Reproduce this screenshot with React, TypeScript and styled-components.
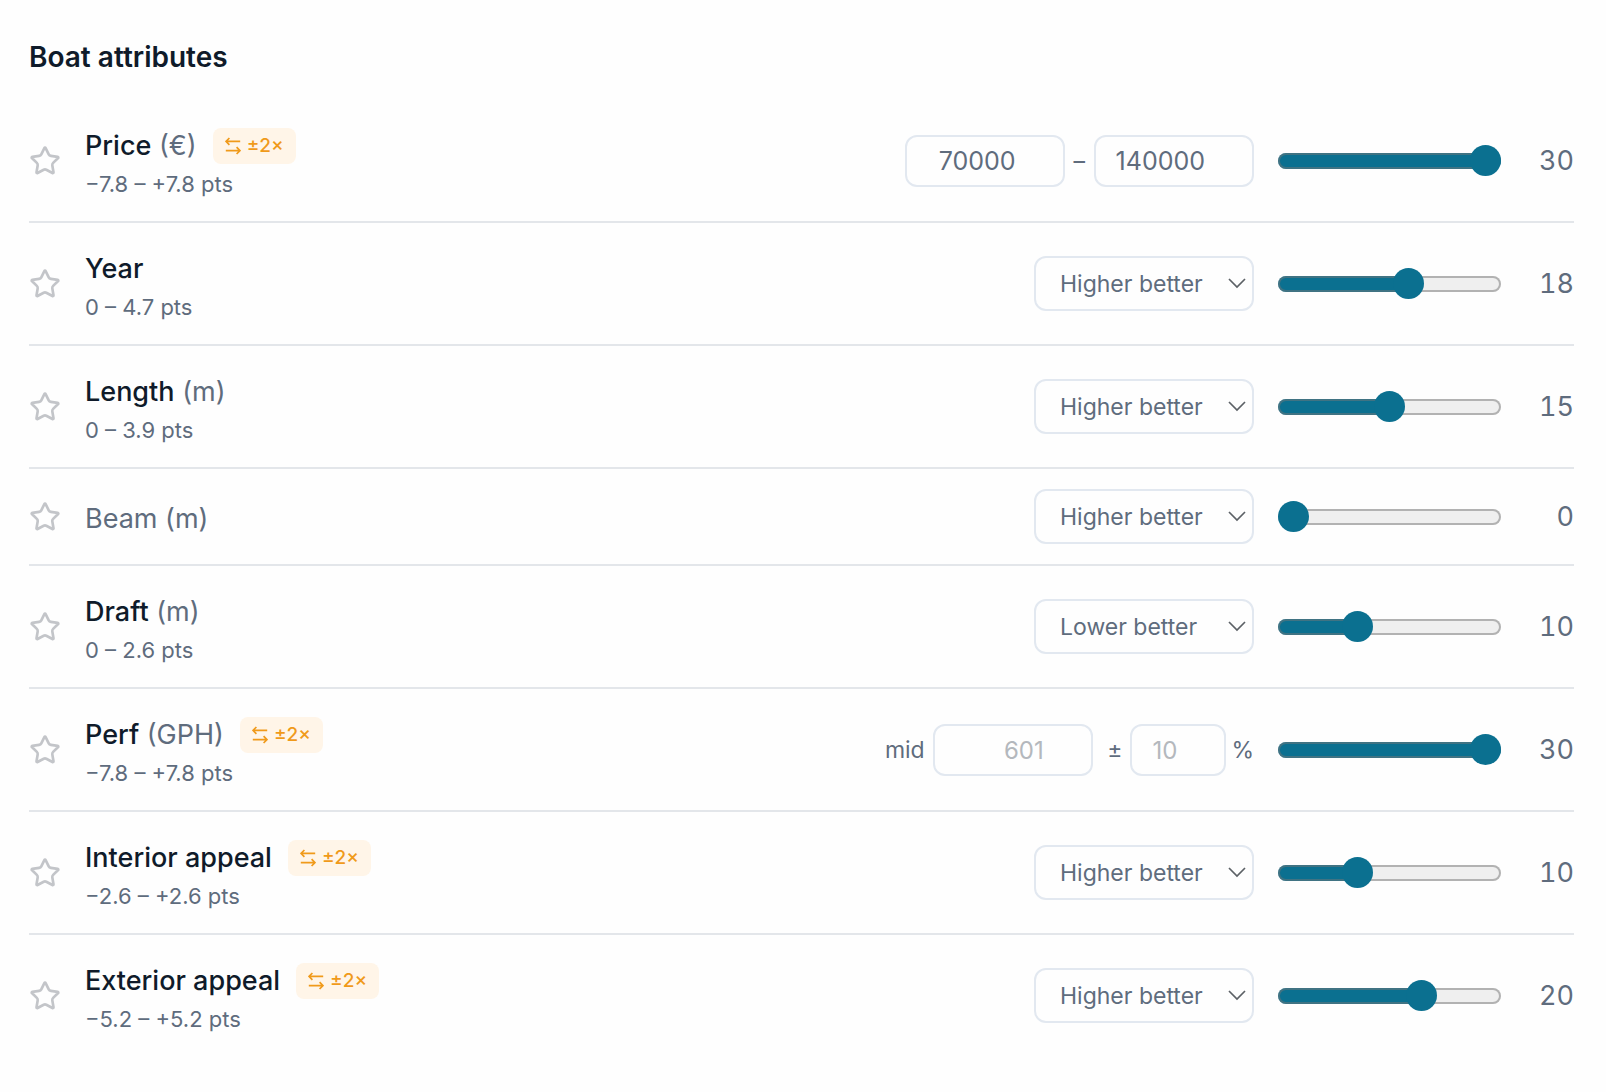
import React, { useState } from "react";
import styled, { createGlobalStyle } from "styled-components";
import { Star } from "lucide-react";

const color = {
  ink: "#0f1b2a",
  muted: "#5f6c7d",
  line: "#e3e6ea",
  field: "#e2e8f0",
  faint: "#b4b8bd",
  star: "#c3c5c9",
  accent: "#0b7090",
  amber: "#f09a1a",
  amberSoft: "#fff5e8",
};

const GlobalStyle = createGlobalStyle`
  *, *::before, *::after { box-sizing: border-box; }
  body {
    margin: 0;
    background: #fefefe;
    color: ${color.ink};
    font-family: Inter, "Liberation Sans", sans-serif;
  }
  button, input, select { font: inherit; }
`;

const Panel = styled.main`
  padding: 36px 32px 36px 29px;
`;

const Heading = styled.h2`
  margin: 0 0 22px;
  font-size: 28px;
  line-height: 42px;
  font-weight: 600;
`;

const List = styled.ul`
  margin: 0;
  padding: 0;
  list-style: none;
`;

const Row = styled.li`
  display: flex;
  align-items: center;
  gap: 24px;
  padding: 20px 0;
  border-bottom: 2px solid ${color.line};

  &:last-child {
    border-bottom: 0;
  }
`;

const StarButton = styled.button`
  display: flex;
  padding: 0;
  border: 0;
  background: none;
  color: ${color.star};
  cursor: pointer;
`;

const Details = styled.div`
  flex: 1;
  min-width: 0;
`;

const Title = styled.div`
  display: flex;
  align-items: center;
  gap: 16px;
  padding-top: 4px;
  font-size: 27px;
  line-height: 44px;
`;

const Name = styled.span<{ $off: boolean }>`
  font-weight: ${(p) => (p.$off ? 400 : 500)};
  color: ${(p) => (p.$off ? color.muted : color.ink)};
`;

const Unit = styled.span`
  font-weight: 400;
  color: ${color.muted};
`;

const Badge = styled.span`
  display: flex;
  align-items: center;
  gap: 6px;
  height: 36px;
  padding: 0 12px;
  border-radius: 8px;
  background: ${color.amberSoft};
  color: ${color.amber};
  font-size: 19px;
  font-weight: 500;
  line-height: 36px;
`;

const Points = styled.div`
  color: ${color.muted};
  font-size: 22px;
  line-height: 33px;
`;

const Controls = styled.div`
  display: flex;
  align-items: center;
  gap: 8px;
  color: ${color.muted};
  font-size: 23px;
  line-height: 36px;
`;

const Dash = styled.span`
  padding: 0 1px;
`;

const WithSuffix = styled.span`
  display: flex;
  align-items: center;
  gap: 5px;
`;

const NumberField = styled.input<{ $short?: boolean }>`
  width: ${(p) => (p.$short ? 96 : 160)}px;
  height: 52px;
  padding: 0 47px 0 16px;
  border: 2px solid ${color.field};
  border-radius: 12px;
  background: transparent;
  color: ${color.muted};
  font-size: 25px;
  text-align: right;
  appearance: textfield;

  &::-webkit-inner-spin-button {
    display: none;
  }

  &::placeholder {
    color: ${color.faint};
    font-size: 24px;
  }
`;

const SelectWrap = styled.div`
  position: relative;
  display: flex;
`;

const Select = styled.select`
  width: 220px;
  height: 55px;
  padding: 0 40px 0 24px;
  border: 2px solid ${color.field};
  border-radius: 12px;
  background: transparent;
  color: ${color.muted};
  appearance: none;
`;

const Caret = styled.svg`
  position: absolute;
  top: 20px;
  right: 7px;
  width: 20px;
  height: 14px;
  pointer-events: none;
`;

const Slider = styled.input`
  width: 223px;
  height: 31px;
  margin: 0;
  background: transparent;
  appearance: none;
  cursor: pointer;

  &::-webkit-slider-runnable-track {
    height: 16px;
    border-radius: 8px;
    background: linear-gradient(
      to right,
      ${color.accent} var(--fill),
      #efefef var(--fill)
    );
    box-shadow: inset 0 0 0 2px rgba(118, 118, 118, 0.5);
  }

  &::-webkit-slider-thumb {
    width: 31px;
    height: 31px;
    margin-top: -8px;
    border: 0;
    border-radius: 50%;
    background: ${color.accent};
    appearance: none;
  }
`;

const Weight = styled.output`
  width: 49px;
  color: ${color.muted};
  font-size: 27px;
  font-variant-numeric: tabular-nums;
  line-height: 40px;
  text-align: right;
`;

const SwapIcon = () => (
  <svg width="16" height="18" viewBox="0 0 16 18" fill="none" stroke="currentColor" strokeWidth="1.7" aria-hidden="true">
    <path d="M15.2 4.4H1M4.4 1 1 4.4l3.4 3.4M.8 13.6H15M11.6 10.2l3.4 3.4-3.4 3.4" />
  </svg>
);

type Control = "range" | "deviation" | "higher" | "lower";

interface Attribute {
  name: string;
  unit?: string;
  points?: string;
  boosted?: boolean;
  control: Control;
  weight: number;
}

const attributes: Attribute[] = [
  { name: "Price", unit: "(€)", points: "−7.8 – +7.8 pts", boosted: true, control: "range", weight: 30 },
  { name: "Year", points: "0 – 4.7 pts", control: "higher", weight: 18 },
  { name: "Length", unit: "(m)", points: "0 – 3.9 pts", control: "higher", weight: 15 },
  { name: "Beam", unit: "(m)", control: "higher", weight: 0 },
  { name: "Draft", unit: "(m)", points: "0 – 2.6 pts", control: "lower", weight: 10 },
  { name: "Perf", unit: "(GPH)", points: "−7.8 – +7.8 pts", boosted: true, control: "deviation", weight: 30 },
  { name: "Interior appeal", points: "−2.6 – +2.6 pts", boosted: true, control: "higher", weight: 10 },
  { name: "Exterior appeal", points: "−5.2 – +5.2 pts", boosted: true, control: "higher", weight: 20 },
];

const MAX_WEIGHT = 30;

function AttributeControl({ name, control }: { name: string; control: Control }) {
  if (control === "range") {
    return (
      <Controls>
        <NumberField type="number" defaultValue={70000} aria-label={`${name} minimum`} />
        <Dash>–</Dash>
        <NumberField type="number" defaultValue={140000} aria-label={`${name} maximum`} />
      </Controls>
    );
  }
  if (control === "deviation") {
    return (
      <Controls>
        <label htmlFor="mid">mid</label>
        <NumberField id="mid" type="number" placeholder="601" />
        <label htmlFor="spread">&nbsp;±</label>
        <WithSuffix>
          <NumberField id="spread" type="number" placeholder="10" $short />
          <span>%</span>
        </WithSuffix>
      </Controls>
    );
  }
  return (
    <Controls>
      <SelectWrap>
        <Select defaultValue={control} aria-label={`${name} preference`}>
          <option value="higher">Higher better</option>
          <option value="lower">Lower better</option>
        </Select>
        <Caret viewBox="0 0 20 14" fill="none" stroke="#5c6166" strokeWidth="1.7" aria-hidden="true">
          <path d="m2 3 8 8 8-8" />
        </Caret>
      </SelectWrap>
    </Controls>
  );
}

function AttributeRow({ name, unit, points, boosted, control, weight }: Attribute) {
  const [value, setValue] = useState(weight);
  const fill = { "--fill": `${(value / MAX_WEIGHT) * 100}%` } as React.CSSProperties;
  return (
    <Row>
      <StarButton type="button" aria-label={`Mark ${name} as important`}>
        <Star size={32} strokeWidth={2} />
      </StarButton>
      <Details>
        <Title>
          <Name $off={value === 0}>
            {name}
            {unit && <Unit> {unit}</Unit>}
          </Name>
          {boosted && (
            <Badge>
              <SwapIcon />
              ±2×
            </Badge>
          )}
        </Title>
        {points && <Points>{points}</Points>}
      </Details>
      <AttributeControl name={name} control={control} />
      <Slider
        type="range"
        min={0}
        max={MAX_WEIGHT}
        value={value}
        style={fill}
        aria-label={`${name} weight`}
        onChange={(e) => setValue(Number(e.target.value))}
      />
      <Weight>{value}</Weight>
    </Row>
  );
}

export default function App() {
  return (
    <>
      <GlobalStyle />
      <Panel>
        <Heading>Boat attributes</Heading>
        <List>
          {attributes.map((attribute) => (
            <AttributeRow key={attribute.name} {...attribute} />
          ))}
        </List>
      </Panel>
    </>
  );
}
